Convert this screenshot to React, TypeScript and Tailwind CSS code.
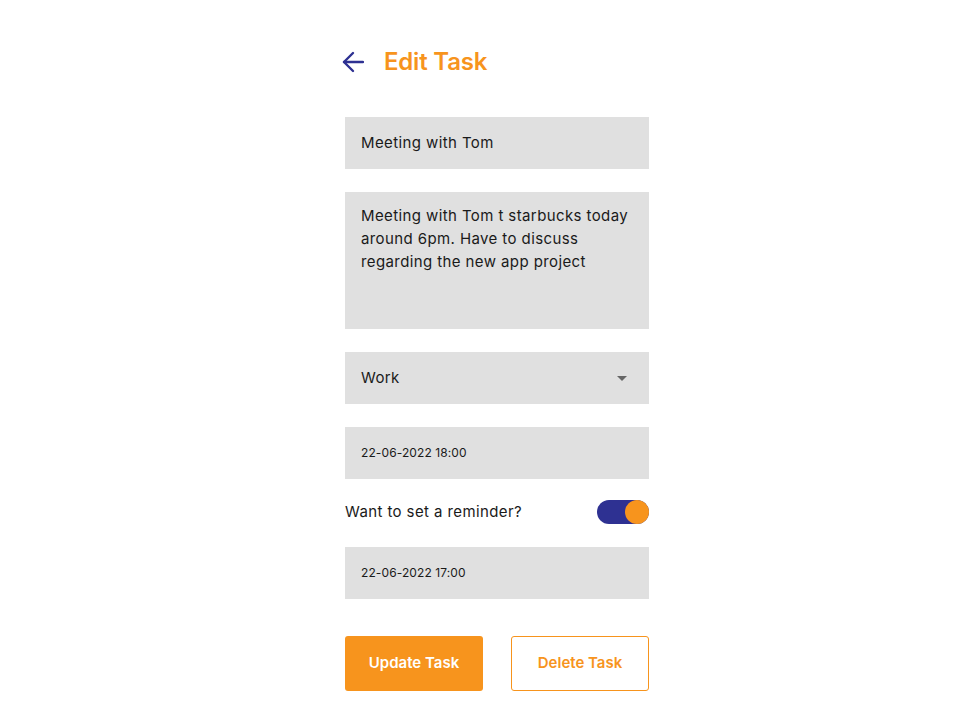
const font = { fontFamily: '"Inter", "Noto Sans", sans-serif' }

function Field({ children, className = "" }: { children: React.ReactNode; className?: string }) {
  return (
    <div className={`bg-[#e0e0e0] px-4 text-[#1a1a1a] ${className}`}>{children}</div>
  )
}

export default function App() {
  return (
    <div className="min-h-[720px] w-full bg-white" style={font}>
      <div className="mx-auto w-[304px] pt-[46px] translate-x-[17px]">
        <div className="flex h-[32px] items-center">
          <svg width="22" height="22" viewBox="0 0 22 22" className="-ml-[3px]" fill="none" stroke="#2e3192" strokeWidth="2.4" strokeLinecap="round" strokeLinejoin="round">
            <path d="M21 11H2" />
            <path d="M11 2 2 11l9 9" />
          </svg>
          <h1 className="ml-[20px] text-[24px] font-semibold tracking-[-0.2px] text-[#f7941d]">Edit Task</h1>
        </div>

        <div className="mt-[39px] flex flex-col tracking-[0.4px]">
          <Field className="flex h-[52px] items-center text-[15px]">Meeting with Tom</Field>

          <Field className="mt-[23px] h-[137px] pt-[12px] text-[15px] leading-[23px]">
            Meeting with Tom t starbucks today around 6pm. Have to discuss regarding the new app project
          </Field>

          <Field className="mt-[23px] flex h-[52px] items-center justify-between text-[15px]">
            <span>Work</span>
            <svg width="10" height="5" viewBox="0 0 10 5" className="mr-[6px]">
              <path d="M0 0h10L5 5z" fill="#666" />
            </svg>
          </Field>

          <Field className="mt-[23px] flex h-[52px] items-center text-[12px] tracking-[0.1px]">22-06-2022 18:00</Field>

          <div className="mt-[21px] flex h-[24px] items-center justify-between">
            <span className="text-[15px] text-[#1a1a1a]">Want to set a reminder?</span>
            <div className="flex h-[24px] w-[52px] items-center justify-end rounded-full bg-[#2e3192]">
              <div className="h-[24px] w-[24px] rounded-full bg-[#f7941d]" />
            </div>
          </div>

          <Field className="mt-[23px] flex h-[52px] items-center text-[12px] tracking-[0.1px]">22-06-2022 17:00</Field>

          <div className="mt-[37px] flex justify-between tracking-normal">
            <button className="h-[55px] w-[138px] rounded-[3px] bg-[#f7941d] text-[15px] font-semibold text-white">
              Update Task
            </button>
            <button className="h-[55px] w-[138px] rounded-[3px] border border-[#f7941d] bg-white text-[15px] font-semibold text-[#f7941d]">
              Delete Task
            </button>
          </div>
        </div>
      </div>
    </div>
  )
}
